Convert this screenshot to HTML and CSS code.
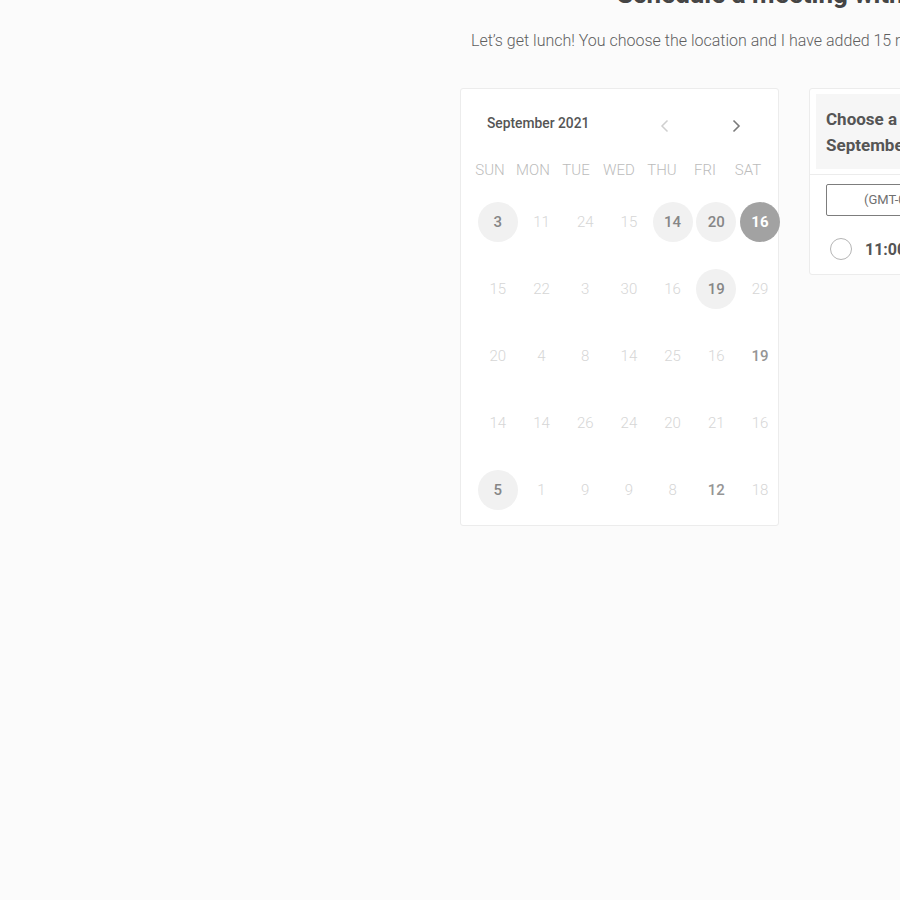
FILE: index.html
```html
<!DOCTYPE html>
<html lang="en">
<head>
<meta charset="utf-8">
<title>Schedule a meeting</title>
<link rel="stylesheet" href="styles.css">
</head>
<body>
<div class="page">
  <h1 class="title">Schedule a meeting with Jane</h1>
  <p class="subtitle">Let’s get lunch! You choose the location and I have added 15 minutes of travel time.</p>
  <div class="cards">
    <section class="calendar">
      <div class="cal-head">
        <span class="month">September 2021</span>
        <div class="nav">
          <button class="nav-btn prev" aria-label="Previous month">
            <svg width="9" height="14" viewBox="0 0 9 14"><path d="M7.5 1.5 2 7l5.5 5.5" fill="none" stroke="currentColor" stroke-width="1.5"/></svg>
          </button>
          <button class="nav-btn next" aria-label="Next month">
            <svg width="9" height="14" viewBox="0 0 9 14"><path d="M1.5 1.5 7 7l-5.5 5.5" fill="none" stroke="currentColor" stroke-width="1.6"/></svg>
          </button>
        </div>
      </div>
      <div class="weekdays">
        <span>SUN</span><span>MON</span><span>TUE</span><span>WED</span><span>THU</span><span>FRI</span><span>SAT</span>
      </div>
      <div class="days">
        <span class="day avail">3</span><span class="day">11</span><span class="day">24</span><span class="day">15</span><span class="day avail">14</span><span class="day avail">20</span><span class="day selected">16</span>
        <span class="day">15</span><span class="day">22</span><span class="day">3</span><span class="day">30</span><span class="day">16</span><span class="day avail">19</span><span class="day">29</span>
        <span class="day">20</span><span class="day">4</span><span class="day">8</span><span class="day">14</span><span class="day">25</span><span class="day">16</span><span class="day strong">19</span>
        <span class="day">14</span><span class="day">14</span><span class="day">26</span><span class="day">24</span><span class="day">20</span><span class="day">21</span><span class="day">16</span>
        <span class="day avail">5</span><span class="day">1</span><span class="day">9</span><span class="day">9</span><span class="day">8</span><span class="day strong">12</span><span class="day">18</span>
      </div>
    </section>
    <section class="times">
      <div class="times-head">
        <div class="times-title">Choose a time on<br>September 16, 2021</div>
      </div>
      <div class="tz">(GMT-07:00) Pacific Time</div>
      <label class="slot"><span class="radio"></span><span class="slot-time">11:00 AM</span></label>
    </section>
  </div>
</div>
</body>
</html>
```
FILE: styles.css
```css
html, body {
  margin: 0;
  padding: 0;
  overflow: hidden;
  background: #fbfbfb;
}
body {
  font-family: Roboto, "Liberation Sans", sans-serif;
  width: 900px;
  height: 900px;
}
.page {
  display: flex;
  flex-direction: column;
  padding-left: 460px;
  width: 1400px;
}
.title {
  margin: -21px 0 0 157px;
  font-size: 26px;
  line-height: 30px;
  font-weight: 700;
  color: #454545;
  white-space: nowrap;
}
.subtitle {
  margin: 22px 0 0 11px;
  font-size: 16px;
  line-height: 20px;
  font-weight: 300;
  color: #5f5f5f;
  white-space: nowrap;
}
.cards {
  display: flex;
  align-items: flex-start;
  gap: 30px;
  margin-top: 37px;
}
.calendar {
  box-sizing: border-box;
  width: 319px;
  height: 438px;
  background: #fff;
  border: 1px solid #ececec;
  border-radius: 3px;
}
.cal-head {
  display: flex;
  height: 60px;
}
.month {
  margin: 26px 0 0 26px;
  font-size: 13.8px;
  line-height: 16px;
  font-weight: 500;
  color: #555;
}
.nav {
  display: flex;
  gap: 48px;
  margin: 30px 30px 0 auto;
}
.nav-btn {
  width: 24px;
  height: 14px;
  padding: 0;
  border: 0;
  background: none;
  display: flex;
  justify-content: center;
  align-items: center;
}
.prev { color: #cfcfcf; }
.next { color: #7a7a7a; }
.weekdays {
  display: grid;
  grid-template-columns: repeat(7, 43px);
  margin: 11px 0 0 7.5px;
  font-size: 15px;
  line-height: 20px;
  font-weight: 300;
  color: #bcbcbc;
  text-align: center;
}
.days {
  display: grid;
  grid-template-columns: repeat(7, 43.7px);
  grid-auto-rows: 67px;
  margin: 8.5px 0 0 15px;
  width: 306px;
}
.day {
  justify-self: center;
  align-self: center;
  width: 40px;
  height: 40px;
  border-radius: 50%;
  display: flex;
  align-items: center;
  justify-content: center;
  font-size: 15px;
  font-weight: 300;
  color: #d6d6d6;
}
.day.avail {
  background: #f1f1f1;
  color: #868686;
  font-weight: 500;
}
.day.strong {
  color: #959595;
  font-weight: 500;
}
.day.selected {
  background: #a2a2a2;
  color: #fff;
  font-weight: 700;
}
.times {
  box-sizing: border-box;
  width: 320px;
  height: 187px;
  background: #fff;
  border: 1px solid #ececec;
  border-radius: 3px;
  flex-shrink: 0;
}
.times-head {
  padding: 5px 0 5px 6px;
  border-bottom: 1px solid #ececec;
}
.times-title {
  background: #f6f6f6;
  padding: 12px 0 11px 10px;
  font-size: 17px;
  line-height: 26px;
  font-weight: 700;
  color: #555;
  white-space: nowrap;
}
.tz {
  box-sizing: border-box;
  height: 32px;
  margin: 9px 0 0 16px;
  padding-left: 37px;
  border: 1px solid #7d7d7d;
  border-radius: 2px;
  font-size: 13px;
  line-height: 30px;
  color: #707070;
  white-space: nowrap;
}
.slot {
  display: flex;
  align-items: center;
  gap: 13px;
  margin: 22px 0 0 20px;
}
.radio {
  box-sizing: border-box;
  width: 22px;
  height: 22px;
  border: 1.5px solid #b5b5b5;
  border-radius: 50%;
}
.slot-time {
  font-size: 16px;
  font-weight: 700;
  color: #555;
  white-space: nowrap;
}
```
